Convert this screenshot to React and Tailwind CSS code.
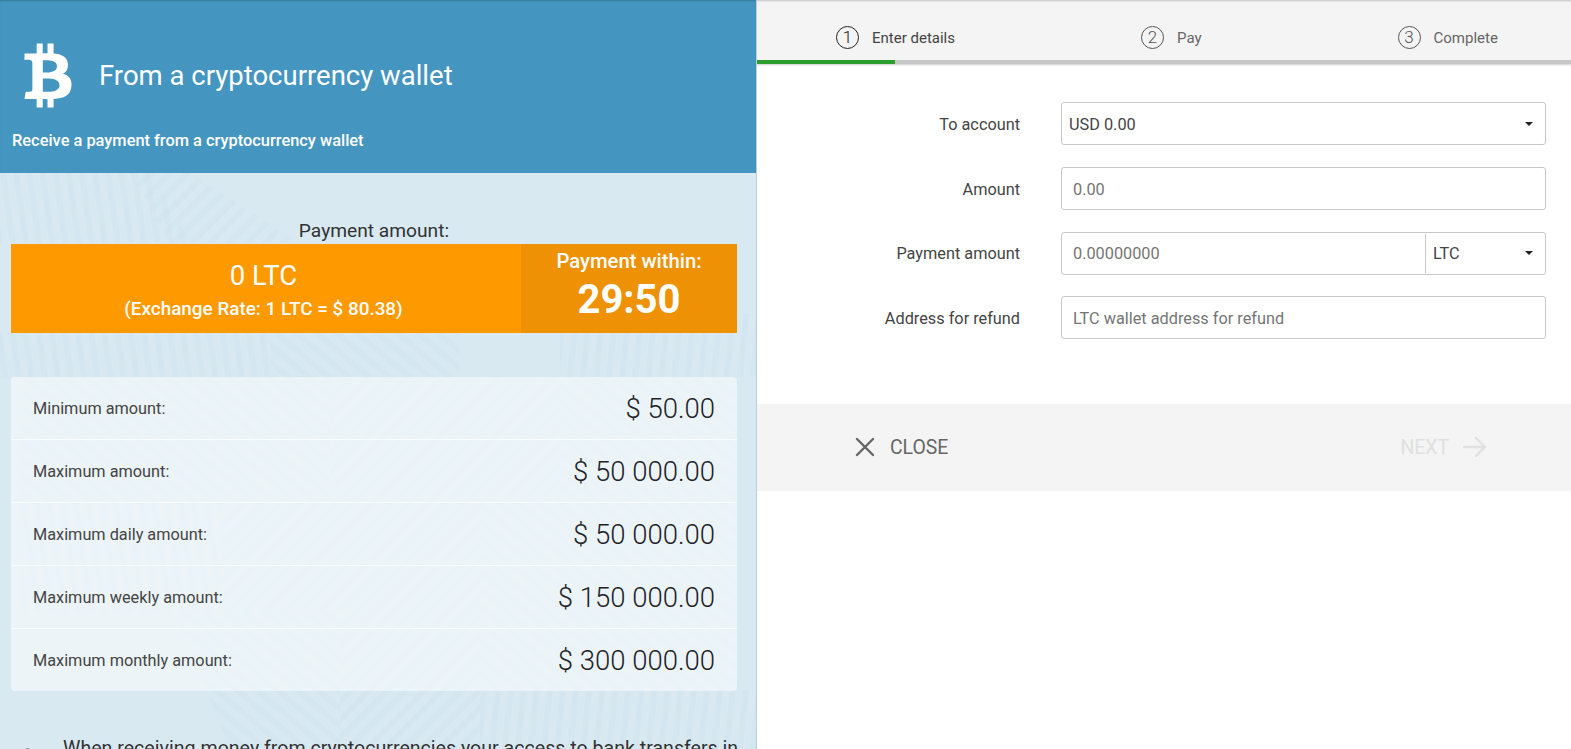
import { FaBtc } from "react-icons/fa";

const limits = [
  ["Minimum amount:", "$ 50.00"],
  ["Maximum amount:", "$ 50 000.00"],
  ["Maximum daily amount:", "$ 50 000.00"],
  ["Maximum weekly amount:", "$ 150 000.00"],
  ["Maximum monthly amount:", "$ 300 000.00"],
];

// faint circuit-like stripes behind the left panel: [pattern id, polygon points]
const stripeAreas = [
  ["v1", "0,0 150,0 190,70 0,70"],
  ["d1", "130,0 190,0 300,70 170,70"],
  ["v1", "0,160 270,160 270,204 0,204"],
  ["d2", "270,160 460,160 460,204 270,204"],
  ["v2", "560,140 756,140 756,204 560,204"],
  ["d2", "20,204 330,204 330,330 20,330"],
  ["d1", "330,204 560,204 560,330 330,330"],
  ["d2", "560,204 736,204 736,330 560,330"],
  ["v1", "20,330 220,330 220,440 20,440"],
  ["d1", "220,330 480,330 480,440 220,440"],
  ["d2", "480,330 736,330 736,517 480,517"],
  ["d2", "175,440 340,440 340,576 230,576"],
  ["d1", "340,440 480,440 480,576 340,576"],
  ["v2", "480,517 756,517 756,576 480,576"],
];

function Pattern() {
  return (
    <svg className="absolute left-0 top-[173px]" width="756" height="576" fill="none">
      <defs>
        <pattern id="v1" width="13" height="13" patternUnits="userSpaceOnUse" patternTransform="rotate(-8)">
          <rect width="6" height="13" fill="#cfe2ec" />
        </pattern>
        <pattern id="v2" width="13" height="13" patternUnits="userSpaceOnUse" patternTransform="rotate(6)">
          <rect width="6" height="13" fill="#cfe2ec" />
        </pattern>
        <pattern id="d1" width="13" height="13" patternUnits="userSpaceOnUse" patternTransform="rotate(45)">
          <rect width="6" height="13" fill="#cfe2ec" />
        </pattern>
        <pattern id="d2" width="13" height="13" patternUnits="userSpaceOnUse" patternTransform="rotate(-50)">
          <rect width="6" height="13" fill="#cfe2ec" />
        </pattern>
      </defs>
      {stripeAreas.map(([id, points]) => (
        <polygon key={points} points={points} fill={`url(#${id})`} opacity="0.4" />
      ))}
    </svg>
  );
}

function Caret() {
  return <span className="border-x-[4px] border-t-[4px] border-x-transparent border-t-[#222]" />;
}

function Step({ n, label, dark, className }) {
  return (
    <div className={`flex items-center gap-[13px] ${className}`}>
      <span className={`flex h-[23px] w-[23px] items-center justify-center rounded-full border text-[17px] font-light ${dark ? "border-[#222] text-[#222]" : "border-[#555] text-[#555]"}`}>
        {n}
      </span>
      <span className={`pt-[2px] text-[15px] ${dark ? "text-[#444]" : "text-[#666]"}`}>{label}</span>
    </div>
  );
}

function Row({ label, children }) {
  return (
    <div className="flex h-[43px] items-center">
      <label className="w-[304px] pr-[41px] pt-[3px] text-right text-[16.3px] text-[#444]">{label}</label>
      <div className="h-full w-[485px]">{children}</div>
    </div>
  );
}

const inputBox = "h-full w-full rounded-[3px] border border-[#c8c8c8] bg-white px-[11px] pt-[2px] text-[16.3px] text-[#444] outline-none placeholder:text-[#757575]";

export default function App() {
  return (
    <div className="flex h-[749px] overflow-hidden bg-white font-['Roboto',sans-serif]">
      {/* LEFT PANEL */}
      <div className="relative z-10 flex w-[757px] shrink-0 flex-col overflow-hidden border-r border-[#b9cfdb] bg-[#d8e9f1]">
        <Pattern />
        <div className="relative h-[173px] shrink-0 bg-[#4495c0] px-3 pt-[43px] text-white shadow-[inset_0_2px_2px_-1px_rgba(0,0,0,0.2)]">
          <div className="flex items-center">
            <FaBtc className="ml-[12px] h-[65px] w-[48px]" />
            <h1 className="ml-[27px] text-[27.5px]">From a cryptocurrency wallet</h1>
          </div>
          <p className="mt-[21px] text-[16.4px] font-medium">Receive a payment from a cryptocurrency wallet</p>
        </div>

        <div className="relative px-[11px] pt-[45px]">
          <p className="w-[726px] text-center text-[19.2px] leading-[26px] text-[#333]">Payment amount:</p>

          <div className="flex h-[89px] w-[726px] text-white">
            <div className="flex flex-1 flex-col items-center bg-[#ff9900] pr-[5px] pt-[15px]">
              <span className="text-[27.5px] leading-[34px]">0 LTC</span>
              <span className="mt-[4px] text-[18.9px] font-medium leading-[24px]">(Exchange Rate: 1 LTC = $ 80.38)</span>
            </div>
            <div className="flex w-[216px] flex-col items-center bg-[#ee9104] pt-[5px]">
              <span className="text-[20.3px] font-medium leading-[24px]">Payment within:</span>
              <span className="mt-[2px] text-[40px] font-bold leading-[50px]">29:50</span>
            </div>
          </div>

          <div className="mt-[44px] w-[726px] rounded-[4px] bg-white/50">
            {limits.map(([label, value]) => (
              <div key={label} className="flex h-[63px] items-center justify-between border-b border-white/70 px-[22px] pt-[2px] last:h-[62px] last:border-b-0">
                <span className="text-[16.3px] text-[#444]">{label}</span>
                <span className="text-[27.5px] font-light text-[#1f2328]">{value}</span>
              </div>
            ))}
          </div>

          <div className="mt-[45px] flex w-[726px] gap-[33px]">
            <span className="ml-[14px] mt-[12px] h-[3px] w-[5px] shrink-0 rounded-t-sm bg-[#999]" />
            <p className="whitespace-nowrap text-[19.6px] leading-[26px] text-[#333]">
              When receiving money from cryptocurrencies your access to bank transfers in
            </p>
          </div>
        </div>
      </div>

      {/* RIGHT PANEL */}
      <div className="min-w-0 flex-1">
        <div className="h-[64px] bg-[#f4f4f4] shadow-[inset_0_2px_2px_-1px_rgba(0,0,0,0.2),0_1px_2px_rgba(0,0,0,0.2)]">
          <div className="flex h-[60px] items-center pl-[79px] pt-[15px]">
            <Step n="1" label="Enter details" dark />
            <Step n="2" label="Pay" className="ml-[186px]" />
            <Step n="3" label="Complete" className="ml-[196px]" />
          </div>
          <div className="h-1 bg-[#c8c8c8]">
            <div className="h-full w-[138px] bg-[#2c9f2c]" />
          </div>
        </div>

        <form className="flex flex-col gap-[21.67px] pt-[38.4px]">
          <Row label="To account">
            <div className={`${inputBox} flex items-center justify-between !pl-[7px] !pr-[12px] !pt-0`}>
              <span className="pt-[3px]">USD 0.00</span>
              <Caret />
            </div>
          </Row>
          <Row label="Amount">
            <input className={inputBox} placeholder="0.00" />
          </Row>
          <Row label="Payment amount">
            <div className="flex h-full rounded-[3px] border border-[#c8c8c8]">
              <input className="min-w-0 flex-1 rounded-[3px] px-[11px] pt-[2px] text-[16.3px] outline-none placeholder:text-[#757575]" placeholder="0.00000000" />
              <div className="my-px flex w-[120px] items-center justify-between border-l border-[#c8c8c8] pl-[7px] pr-[12px] text-[16.3px] text-[#444]">
                <span className="pt-[3px]">LTC</span>
                <Caret />
              </div>
            </div>
          </Row>
          <Row label="Address for refund">
            <input className={inputBox} placeholder="LTC wallet address for refund" />
          </Row>
        </form>

        <div className="mt-[64.6px] flex h-[87px] items-center justify-between bg-[#f4f4f4] pl-[98px] pr-[84px] text-[19.4px]">
          <button type="button" className="flex items-center gap-[15px] text-[#666]">
            <svg width="20" height="20" viewBox="0 0 20 20" fill="none" stroke="#666" strokeWidth="2.4" strokeLinecap="round">
              <path d="M2 2l16 16M18 2L2 18" />
            </svg>
            CLOSE
          </button>
          <button type="button" className="flex items-center gap-[14px] text-[#e0e0e0]">
            NEXT
            <svg width="24" height="22" viewBox="0 0 24 22" fill="none" stroke="#e0e0e0" strokeWidth="2.4" strokeLinecap="round" strokeLinejoin="round">
              <path d="M1 11h21M13 2l9 9-9 9" />
            </svg>
          </button>
        </div>
      </div>
    </div>
  );
}
